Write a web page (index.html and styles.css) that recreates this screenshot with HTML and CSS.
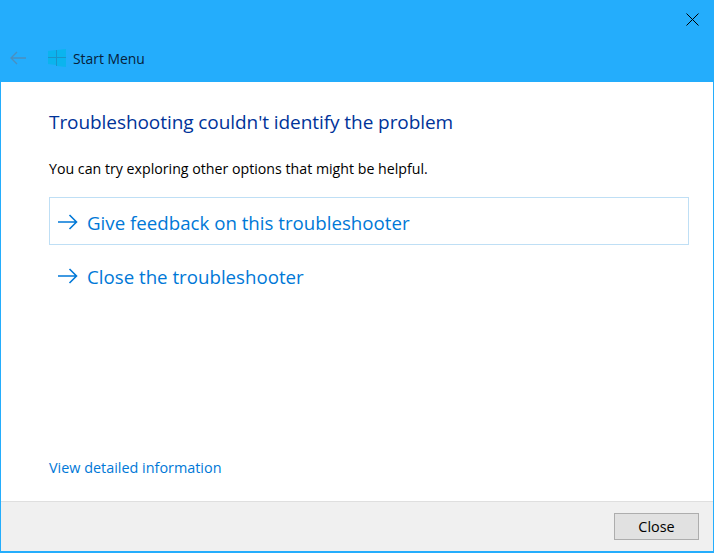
FILE: index.html
```html
<!DOCTYPE html>
<html lang="en">
<head>
<meta charset="utf-8">
<title>Start Menu troubleshooter</title>
<link rel="stylesheet" href="styles.css">
</head>
<body>
<div class="window">
  <header class="titlebar">
    <div class="close-row">
      <svg class="close-icon" width="13" height="13" viewBox="0 0 13 13"><path d="M.5.5l12 12M12.5.5l-12 12" stroke="#000" stroke-width="1" fill="none"/></svg>
    </div>
    <div class="nav-row">
      <svg class="back-icon" width="16" height="14" viewBox="0 0 16 14"><path d="M16 7H1M7 1L1 7l6 6" stroke="#4a8fc0" stroke-width="1.3" fill="none"/></svg>
      <svg class="app-icon" width="18" height="18" viewBox="0 0 18 18"><path d="M0 2l8-1v7H0zM9 1l9-1v8H9zM0 9h8v7l-8-1zM9 9h9v9l-9-1z" fill="#0bb4ee"/><path d="M0 8.5h18M8.5 1v16" stroke="#1b93c9" stroke-width="1"/></svg>
      <span class="app-name">Start Menu</span>
    </div>
  </header>
  <main class="content">
    <h1 class="heading">Troubleshooting couldn't identify the problem</h1>
    <p class="intro">You can try exploring other options that might be helpful.</p>
    <div class="links">
      <a class="link link-focused"><svg class="arrow" width="20" height="16" viewBox="0 0 20 16"><path d="M0 8h18.5M11.5 1l7 7-7 7" stroke="#0078d7" stroke-width="1.6" fill="none"/></svg><span>Give feedback on this troubleshooter</span></a>
      <a class="link"><svg class="arrow" width="20" height="16" viewBox="0 0 20 16"><path d="M0 8h18.5M11.5 1l7 7-7 7" stroke="#0078d7" stroke-width="1.6" fill="none"/></svg><span>Close the troubleshooter</span></a>
    </div>
    <a class="details">View detailed information</a>
  </main>
  <footer class="footer">
    <button class="close-btn">Close</button>
  </footer>
</div>
</body>
</html>
```
FILE: styles.css
```css
* { box-sizing: border-box; }
html, body { margin: 0; height: 100%; }
body { font-family: "Open Sans", "Noto Sans", sans-serif; background: #fff; overflow: hidden; }
.window { height: 553px; width: 714px; display: flex; flex-direction: column; border: 1px solid #24adfc; border-top: 0; background: #fff; }
.titlebar { height: 82px; background: #24adfc; flex: none; display: flex; flex-direction: column; margin: 0 -1px; padding: 0 15px 0 10px; }
.close-row { height: 42px; display: flex; justify-content: flex-end; align-items: flex-start; padding-top: 13px; }
.close-icon { display: block; }
.nav-row { display: flex; align-items: center; height: 32px; }
.back-icon { display: block; margin-right: 22px; }
.app-icon { display: block; margin-right: 7px; }
.app-name { font-size: 13.9px; color: #06213a; }
.content { flex: 1; display: flex; flex-direction: column; padding: 27px 24px 24px 48px; }
.heading { margin: 0; font-size: 19px; line-height: 27px; font-weight: 400; color: #003399; letter-spacing: -0.07px; }
.intro { margin: 24px 0 0; font-size: 14.2px; line-height: 18px; color: #000; }
.links { display: flex; flex-direction: column; gap: 6px; margin-top: 19px; }
.link { display: flex; align-items: center; height: 48px; padding: 2px 0 0 8px; gap: 9px; border: 1px solid transparent; color: #0078d7; font-size: 18.7px; }
.link-focused { border-color: #bfdff5; }
.arrow { display: block; flex: none; }
.details { margin-top: auto; font-size: 14.4px; line-height: 18px; color: #0078d7; }
.footer { height: 51px; flex: none; background: #f0f0f0; border-top: 1px solid #dfdfdf; border-bottom: 1px solid #24adfc; display: flex; justify-content: flex-end; align-items: flex-start; padding: 11px 14px 0 0; }
.close-btn { width: 85px; height: 27px; background: #e1e1e1; border: 1px solid #adadad; font: inherit; font-size: 14.4px; color: #000; padding: 0; }
```
